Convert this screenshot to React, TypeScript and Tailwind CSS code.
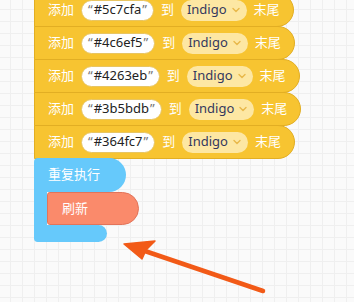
const rows = [
  { color: "#5c7cfa" },
  { color: "#4c6ef5" },
  { color: "#4263eb" },
  { color: "#3b5bdb" },
  { color: "#364fc7" },
];

const font = { fontFamily: '"Noto Sans", "Noto Sans CJK SC", sans-serif' };

const Chevron = () => (
  <svg width="10" height="10" viewBox="0 0 10 10" className="ml-[4px]">
    <path d="M2 3.5 L5 6.5 L8 3.5" fill="none" stroke="#e8b84a" strokeWidth="1.4" strokeLinecap="round" strokeLinejoin="round" />
  </svg>
);

const AddRow = ({ color }: { color: string }) => (
  <div className="flex items-center h-[34px] -mb-px w-fit pl-[13px] pr-[13px] gap-[7px] bg-[#f7c431] border border-[#e2ae23] rounded-r-[17px] text-white text-[13px]">
    <span>添加</span>
    <div className="flex items-center h-[21px] px-[6px] bg-white rounded-full border border-[#e8c562] text-[#222] text-[13px]">
      <span className="text-[#777] mr-px">“</span>
      {color}
      <span className="text-[#777] ml-px">”</span>
    </div>
    <span>到</span>
    <div className="flex items-center h-[21px] pl-[6px] pr-[6px] bg-[#fde7a3] rounded-full text-[#34385e] text-[13px]">
      Indigo
      <Chevron />
    </div>
    <span>末尾</span>
  </div>
);

export default function App() {
  return (
    <div
      className="relative w-[354px] h-[302px] overflow-hidden bg-[#fafafa] bg-[linear-gradient(to_right,#efefef_1px,transparent_1px),linear-gradient(to_bottom,#efefef_1px,transparent_1px)] bg-[size:12px_12px] bg-[position:10px_9px]"
      style={font}
    >
      <div className="flex flex-col pl-[34px] -mt-[7px]">
        {rows.map((r) => (
          <AddRow key={r.color} color={r.color} />
        ))}
        <div className="flex flex-col">
          <div className="flex items-center w-[92px] h-[34px] pl-[14px] bg-[#66c9fb] rounded-r-[17px] rounded-tl-[4px] text-white text-[13px]">
            重复执行
          </div>
          <div className="flex">
            <div className="w-[13px] h-[33px] bg-[#66c9fb]" />
            <div className="flex items-center w-[92px] h-[33px] pl-[14px] bg-[#fa8a6b] border border-[#e2745a] rounded-r-[17px] rounded-l-[3px] text-white text-[13px]">
              刷新
            </div>
          </div>
          <div className="w-[73px] h-[17px] bg-[#66c9fb] rounded-r-[9px] rounded-bl-[4px]" />
        </div>
      </div>
      <svg className="absolute left-0 top-0" width="354" height="302" viewBox="0 0 354 302">
        <line x1="263" y1="291" x2="136" y2="248" stroke="#f25a17" strokeWidth="4.5" strokeLinecap="round" />
        <path d="M124 244 L155 241 L146 250 L142 259 Z" fill="#f25a17" stroke="#f25a17" strokeWidth="1.5" strokeLinejoin="round" />
      </svg>
    </div>
  );
}
